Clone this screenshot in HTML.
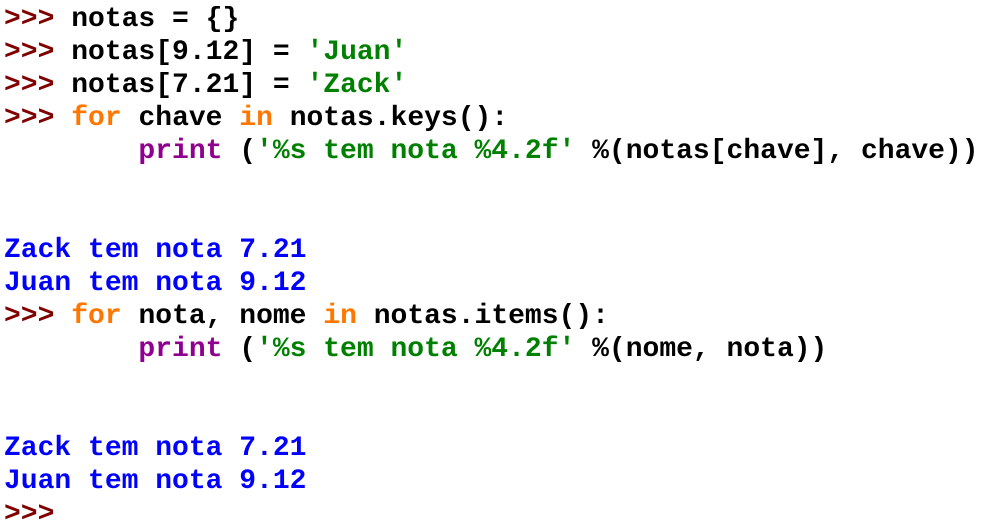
<!DOCTYPE html>
<html><head><meta charset="utf-8"><style>
html,body{margin:0;padding:0;background:#fff;width:995px;height:524px;overflow:hidden}
pre{margin:0;position:absolute;left:4px;top:3px;font-family:"Liberation Mono",monospace;font-weight:bold;font-size:28px;line-height:33px;color:#000}
.p{color:#800000}.k{color:#ff7700}.s{color:#008000}.b{color:#900090}.o{color:#0000ff}
</style></head><body><pre><span class="p">&gt;&gt;&gt;</span> notas = {}
<span class="p">&gt;&gt;&gt;</span> notas[9.12] = <span class="s">'Juan'</span>
<span class="p">&gt;&gt;&gt;</span> notas[7.21] = <span class="s">'Zack'</span>
<span class="p">&gt;&gt;&gt;</span> <span class="k">for</span> chave <span class="k">in</span> notas.keys():
        <span class="b">print</span> (<span class="s">'%s tem nota %4.2f'</span> %(notas[chave], chave))


<span class="o">Zack tem nota 7.21</span>
<span class="o">Juan tem nota 9.12</span>
<span class="p">&gt;&gt;&gt;</span> <span class="k">for</span> nota, nome <span class="k">in</span> notas.items():
        <span class="b">print</span> (<span class="s">'%s tem nota %4.2f'</span> %(nome, nota))


<span class="o">Zack tem nota 7.21</span>
<span class="o">Juan tem nota 9.12</span>
<span class="p">&gt;&gt;&gt;</span></pre></body></html>
